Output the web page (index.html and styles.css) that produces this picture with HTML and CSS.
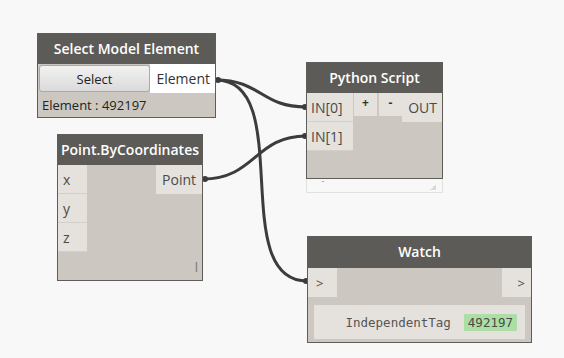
FILE: index.html
```html
<!DOCTYPE html>
<html lang="en">
<head>
  <meta charset="UTF-8">
  <title>Dynamo graph</title>
  <link rel="stylesheet" href="styles.css">
</head>
<body>

<div class="canvas">

  <!-- wires sit under the nodes -->
  <svg class="wires" width="564" height="358" viewBox="0 0 564 358">
    <path d="M216,80 C261,80 261,107 306,107"/>
    <path d="M216,80 C296,80 227,281 307,281"/>
    <path d="M203,179 C255,179 255,136 306,136"/>
    <circle cx="218" cy="80" r="3"/>
    <circle cx="305" cy="107" r="3"/>
    <circle cx="305" cy="136" r="3"/>
    <circle cx="205" cy="179" r="3"/>
    <circle cx="306" cy="281" r="3"/>
  </svg>

  <!-- Select Model Element -->
  <div class="node node-select">
    <div class="node_head">Select Model Element</div>
    <div class="node_body">
      <div class="select_row">
        <button class="btn_select" type="button">Select</button>
        <span class="port port_out port_white">Element</span>
      </div>
      <div class="select_info">Element : 492197</div>
    </div>
  </div>

  <!-- Python Script -->
  <div class="node-python">
    <div class="node">
      <div class="node_head">Python Script</div>
      <div class="node_body py_body">
        <div class="port_col">
          <span class="port port_in">IN[0]</span>
          <span class="port port_in">IN[1]</span>
        </div>
        <div class="py_btns">
          <span class="mini_btn">+</span>
          <span class="mini_btn">-</span>
        </div>
        <span class="port port_out">OUT</span>
      </div>
    </div>
    <div class="py_foot"><span class="foot_tick"></span><span class="grip"></span></div>
  </div>

  <!-- Point.ByCoordinates -->
  <div class="node node-point">
    <div class="node_head">Point.ByCoordinates</div>
    <div class="node_body pt_body">
      <div class="port_col">
        <span class="port port_in port_sq">x</span>
        <span class="port port_in port_sq">y</span>
        <span class="port port_in port_sq">z</span>
      </div>
      <div class="pt_right">
        <span class="port port_out">Point</span>
        <span class="lacing">l</span>
      </div>
    </div>
  </div>

  <!-- Watch -->
  <div class="node node-watch">
    <div class="node_head">Watch</div>
    <div class="node_body">
      <div class="watch_ports">
        <span class="port port_in port_sq">&gt;</span>
        <span class="port port_out port_sq">&gt;</span>
      </div>
      <div class="watch_panel">
        <span class="watch_key">IndependentTag</span>
        <span class="watch_val">492197</span>
      </div>
    </div>
  </div>

</div>

</body>
</html>
```

FILE: styles.css
```css
body { margin: 0; background: #f8f8f8; font-family: "Open Sans", "Noto Sans", sans-serif; }
.canvas { position: relative; width: 564px; height: 358px; overflow: hidden; }

.wires { position: absolute; left: 0; top: 0; }
.wires path { fill: none; stroke: #3c3c3c; stroke-width: 3; }
.wires circle { fill: #3c3c3c; }

/* node shell */
.node { position: absolute; display: flex; flex-direction: column; background: #ccc8c1; border: 1px solid #5f5d5a; box-sizing: border-box; }
.node_head { height: 30px; flex: none; background: #5d5b58; color: #fff; font-size: 14px; font-weight: 600; display: flex; align-items: center; justify-content: center; padding-bottom: 2px; box-sizing: border-box; }
.node_body { flex: 1; display: flex; flex-direction: column; }

.port { display: flex; align-items: center; height: 29px; box-sizing: border-box; font-size: 14px; color: #4a4a4a; background: #e5e2dd; }
.port_in { padding-left: 5px; border-bottom: 1px solid #d3cfc9; }
.port_out { justify-content: flex-end; padding-right: 6px; }
.port_white { background: #fff; }
.port_sq { width: 29px; }
.port_col { display: flex; flex-direction: column; }

/* Select Model Element */
.node-select { left: 37px; top: 33px; width: 179px; height: 85px; }
.select_row { display: flex; height: 29px; }
.btn_select { flex: 1; margin: 1px 0 1px 1px; font: 13px "Open Sans", sans-serif; color: #222; border: 1px solid #a9a9a9; border-radius: 3px; background: linear-gradient(#f2f2f2, #e6e6e6 50%, #dadada); }
.select_row .port_out { width: 65px; color: #333; padding-right: 5px; }
.select_info { flex: 1; display: flex; align-items: center; padding-left: 4px; font-size: 13px; color: #222; }

/* Python Script */
.node-python { position: absolute; left: 306px; top: 62px; width: 137px; }
.node-python .node { position: static; height: 117px; }
.py_body { flex-direction: row; align-items: flex-start; }
.py_body .port_col .port { width: 46px; padding-left: 4px; }
.py_btns { flex: 1; display: flex; gap: 2px; padding-left: 1px; }
.mini_btn { width: 23px; height: 23px; background: #e5e2dd; display: flex; justify-content: center; padding-top: 1px; box-sizing: border-box; font-size: 12px; font-weight: 700; color: #333; }
.py_body .port_out { width: 42px; padding-right: 5px; }
.py_foot { height: 11px; border: 1px solid #e1e1e1; border-top: none; display: flex; justify-content: space-between; align-items: flex-end; padding: 0 6px 2px 15px; }
.foot_tick { width: 2px; height: 1px; background: #aaa; align-self: flex-start; margin-top: 2px; }
.grip { width: 6px; height: 6px; background: linear-gradient(135deg, transparent 50%, #d9d9d9 50%); }

/* Point.ByCoordinates */
.node-point { left: 57px; top: 134px; width: 146px; height: 147px; }
.pt_body { flex-direction: row; }
.pt_right { flex: 1; display: flex; flex-direction: column; align-items: flex-end; justify-content: space-between; }
.pt_right .port_out { width: 46px; }
.lacing { font-size: 13px; color: #777; padding: 0 4px 4px 0; }

/* Watch */
.node-watch { left: 307px; top: 236px; width: 225px; height: 107px; }
.node-watch .node_head { height: 31px; }
.watch_ports { display: flex; justify-content: space-between; }
.watch_ports .port { font-size: 13px; padding-left: 8px; border: none; }
.watch_panel { margin: 8px 6px 0 6px; height: 34px; background: #e5e2dd; display: flex; align-items: center; justify-content: flex-end; gap: 13px; padding-right: 8px; font-family: "DejaVu Sans Mono", "Liberation Mono", monospace; font-size: 12.5px; color: #555; }
.watch_val { background: #addea5; color: #4a4a4a; padding: 1px 4px 1px 4px; }
```
